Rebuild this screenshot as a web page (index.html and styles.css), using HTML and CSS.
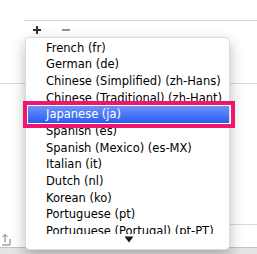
FILE: index.html
```html
<!DOCTYPE html>
<html>
<head>
<meta charset="utf-8">
<link rel="stylesheet" href="styles.css">
</head>
<body>
<div class="pane">
  <div class="header"></div>
  <div class="list">
    <div class="toolbar">
      <svg class="btn" width="10" height="10" viewBox="0 0 10 10"><path d="M5 1v8M1 5h8" stroke="#333" stroke-width="2"/></svg>
      <svg class="btn minus" width="10" height="10" viewBox="0 0 10 10"><path d="M1 5h8" stroke="#777" stroke-width="1.6"/></svg>
    </div>
  </div>
  <div class="section">
    <div class="divider"></div>
  </div>
  <div class="footer">
    <svg class="share" width="10" height="13" viewBox="0 0 10 13"><path d="M-2 6v6h10V6" fill="none" stroke="#777" stroke-width="1"/><path d="M3 9.5V1.5M0.5 4L3 1.5 5.5 4" fill="none" stroke="#777" stroke-width="1"/></svg>
    <div class="sep"></div>
  </div>
  <div class="statusbar"></div>
</div>

<div class="menu">
  <div class="item">French (fr)</div>
  <div class="item">German (de)</div>
  <div class="item">Chinese (Simplified) (zh-Hans)</div>
  <div class="item">Chinese (Traditional) (zh-Hant)</div>
  <div class="item selected">Japanese (ja)</div>
  <div class="item">Spanish (es)</div>
  <div class="item">Spanish (Mexico) (es-MX)</div>
  <div class="item">Italian (it)</div>
  <div class="item">Dutch (nl)</div>
  <div class="item">Korean (ko)</div>
  <div class="item">Portuguese (pt)</div>
  <div class="item">Portuguese (Portugal) (pt-PT)</div>
  <div class="scroll"><svg width="10" height="7" viewBox="0 0 10 7"><path d="M0.5 0.5h9L5 6.5z" fill="#1a1a1a"/></svg></div>
</div>

<div class="mark"></div>
</body>
</html>
```

FILE: styles.css
```css
html, body {
  margin: 0;
  padding: 0;
}
body {
  width: 257px;
  height: 254px;
  overflow: hidden;
  background: #fff;
  font-family: "DejaVu Sans", "Liberation Sans", sans-serif;
  position: relative;
}
.pane {
  display: flex;
  flex-direction: column;
  height: 254px;
}
.header {
  height: 20px;
  flex: none;
}
.list {
  margin-left: 24px;
  border-top: 1px solid #d2d2d2;
  height: 62px;
  flex: none;
}
.toolbar {
  display: flex;
  align-items: center;
  height: 18px;
  padding-left: 8px;
  gap: 19px;
}
.btn {
  display: block;
}
.section {
  border-top: 1px solid #dcdcdc;
  flex: 1;
  display: flex;
  flex-direction: column;
  justify-content: flex-end;
}
.divider {
  margin-left: 120px;
  border-bottom: 1px solid #d8d8d8;
  margin-bottom: 8px;
}
.footer {
  height: 13px;
  display: flex;
  align-items: flex-end;
  gap: 10px;
  padding-left: 0;
  padding-bottom: 1px;
  flex: none;
}
.share {
  display: block;
  margin-left: 2px;
}
.sep {
  width: 1px;
  height: 12px;
  background: #d0d0d0;
  margin-left: 5px;
}
.statusbar {
  height: 6px;
  flex: none;
  background: #e4e4e4;
  border-top: 1px solid #c4c4c4;
}
.menu {
  position: absolute;
  left: 25px;
  top: 37px;
  width: 203px;
  height: 209.5px;
  padding-top: 1.5px;
  background: #fff;
  border: 1px solid rgba(0, 0, 0, 0.14);
  border-radius: 5px;
  box-shadow: 0 5px 14px rgba(0, 0, 0, 0.28);
  overflow: hidden;
}
.item {
  height: 16.7px;
  line-height: 16.7px;
  padding-left: 20px;
  font-size: 11.5px;
  color: #000;
  white-space: nowrap;
}
.item.selected {
  background: linear-gradient(#6f92f8, #2b5cf3);
  color: #fff;
}
.scroll {
  position: absolute;
  left: 0;
  right: 0;
  bottom: 0;
  height: 15px;
  background: #fff;
  display: flex;
  justify-content: center;
  padding-top: 2px;
  padding-left: 2px;
  box-sizing: border-box;
}
.scroll svg {
  display: block;
}
.mark {
  position: absolute;
  left: 23px;
  top: 101px;
  width: 204px;
  height: 19px;
  border: 4px solid #f0156f;
  box-shadow: inset 0 0 0 1px #fff;
}
```
